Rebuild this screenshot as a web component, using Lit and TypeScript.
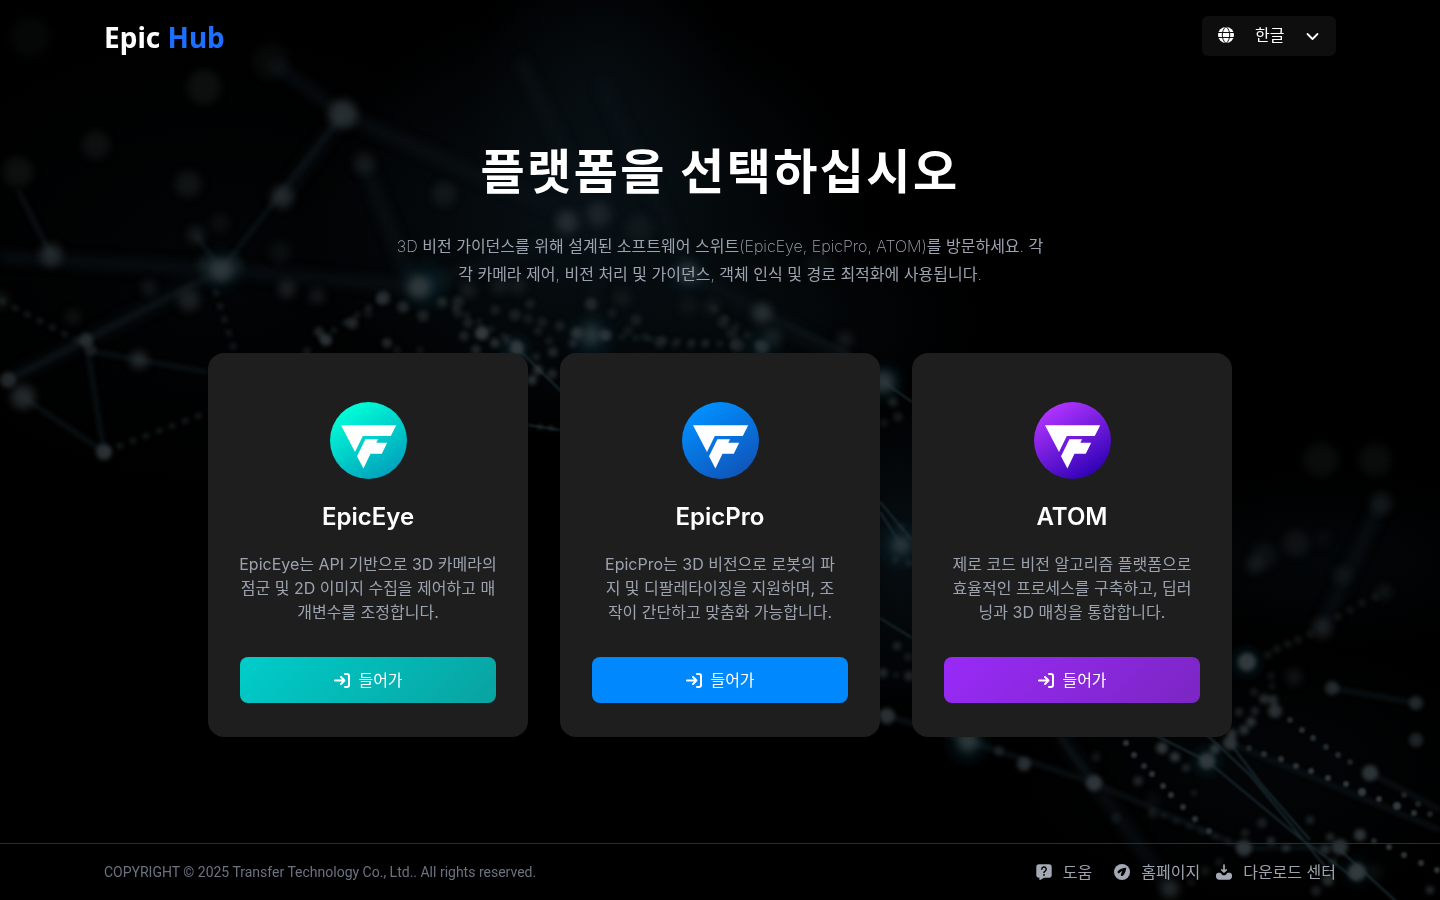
import { LitElement, html, svg, css } from "lit";
import { customElement, property } from "lit/decorators.js";

type Dot = [x: number, y: number, r: number, o: number];

const SOFT_DOTS: Dot[] = [
  [204, 87, 17, 0.25], [271, 62, 18, 0.15], [30, 37, 20, 0.1], [343, 114, 14, 0.75], [96, 145, 14, 0.25],
  [18, 172, 15, 0.25], [188, 184, 13, 0.3], [282, 197, 11, 0.65], [364, 163, 11, 0.35], [444, 194, 12, 0.3],
  [196, 235, 9, 0.4], [220, 223, 10, 0.2], [51, 255, 11, 0.65], [221, 270, 11, 0.9], [206, 264, 9, 0.3],
  [234, 264, 9, 0.3], [280, 252, 11, 0.2], [419, 287, 11, 0.95], [149, 288, 8, 0.35], [189, 300, 11, 0.5],
  [287, 289, 9, 0.5], [317, 296, 8, 0.4], [73, 317, 8, 0.25], [139, 360, 9, 0.65], [23, 397, 12, 0.65],
  [0, 300, 9, 0.3], [567, 222, 11, 0.65], [599, 214, 12, 0.45], [640, 228, 14, 0.2], [688, 273, 11, 0.6],
  [762, 313, 10, 0.75], [773, 337, 9, 0.4], [712, 307, 8, 0.3], [845, 340, 8, 0.4], [468, 290, 8, 0.4],
  [500, 286, 8, 0.35], [518, 286, 8, 0.35], [622, 298, 9, 0.25], [688, 306, 9, 0.2], [820, 265, 14, 0.15],
  [1321, 460, 17, 0.2], [1375, 460, 16, 0.2], [1381, 503, 11, 0.35], [1296, 543, 13, 0.25], [1255, 565, 9, 0.35],
  [1264, 555, 13, 0.2], [1323, 538, 8, 0.15], [1342, 575, 9, 0.25], [1384, 592, 8, 0.3], [1322, 628, 10, 0.5],
  [1294, 677, 8, 0.35], [1153, 800, 7, 0.2], [968, 741, 10, 0.9], [884, 382, 10, 0.9], [1170, 889, 9, 0.65],
  [1375, 872, 8, 0.2], [901, 545, 9, 0.8], [591, 335, 10, 0.7],
];

const FINE_DOTS: Dot[] = [
  [86, 340, 7, 0.7], [91, 350, 6, 0.4], [8, 380, 8, 0.65], [104, 452, 8, 0.8], [383, 298, 7, 0.75],
  [403, 307, 6, 0.6], [423, 316, 6, 0.5], [352, 323, 6, 0.65], [368, 313, 5, 0.3], [319, 332, 5, 0.6],
  [326, 340, 6, 0.85], [307, 351, 4, 0.4], [387, 343, 5, 0.65], [397, 350, 4, 0.3], [420, 350, 4, 0.3],
  [482, 333, 7, 1], [464, 336, 5, 0.55], [468, 323, 5, 0.5], [458, 313, 5, 0.4], [495, 343, 5, 0.7],
  [476, 350, 5, 0.6], [517, 348, 7, 1], [507, 340, 4, 0.5], [442, 303, 6, 0.4], [458, 302, 6, 0.5],
  [495, 310, 5, 0.4], [515, 315, 6, 0.45], [530, 304, 5, 0.4], [528, 319, 5, 0.35], [542, 322, 5, 0.4],
  [538, 331, 4, 0.4], [560, 326, 5, 0.45], [553, 352, 5, 0.6], [549, 341, 4, 0.35], [536, 357, 4, 0.5],
  [538, 370, 5, 0.8], [552, 374, 5, 0.6], [532, 380, 5, 0.8], [577, 333, 6, 0.8], [605, 335, 6, 0.8],
  [591, 304, 6, 0.6], [573, 343, 4, 0.6], [612, 313, 5, 0.3], [636, 320, 6, 0.4], [628, 331, 5, 0.3],
  [645, 337, 4, 0.35], [660, 342, 6, 0.45], [675, 344, 4, 0.35], [691, 345, 4, 0.35], [705, 344, 4, 0.35],
  [723, 322, 6, 0.4], [732, 333, 6, 0.35], [737, 345, 7, 0.5], [762, 347, 7, 0.7], [893, 402, 5, 0.5],
  [898, 417, 5, 0.4], [884, 423, 4, 0.3], [540, 427, 2, 1], [551, 428, 2, 1], [895, 560, 3, 0.5],
  [901, 527, 3, 0.4], [909, 563, 3, 0.5], [897, 646, 4, 0.6], [908, 657, 4, 0.4], [883, 673, 5, 0.6],
  [896, 675, 3, 0.4], [909, 676, 5, 0.6], [887, 716, 8, 0.8], [999, 751, 5, 0.5], [1024, 764, 7, 0.8],
  [1094, 783, 8, 0.9], [1096, 757, 5, 0.35], [1116, 818, 5, 0.3], [1153, 814, 5, 0.3], [1138, 781, 5, 0.6],
  [1162, 748, 6, 0.9], [1175, 757, 5, 0.9], [1186, 768, 4, 0.6], [1194, 793, 3, 0.5], [1207, 761, 8, 1],
  [1230, 743, 7, 0.9], [1215, 749, 5, 0.9], [1232, 734, 5, 0.8], [1244, 848, 8, 0.9], [1262, 823, 5, 0.5],
  [1247, 662, 9, 1], [1332, 688, 7, 0.7], [1416, 703, 7, 0.65], [1416, 740, 7, 0.6], [1275, 711, 7, 0.8],
  [1264, 699, 5, 0.7], [1273, 700, 5, 0.7], [1271, 676, 4, 0.3], [1272, 686, 3, 0.4], [1254, 692, 4, 0.4],
  [1239, 712, 4, 0.6], [1255, 711, 4, 0.6], [1251, 722, 5, 0.8], [1244, 730, 5, 0.8], [1370, 773, 8, 0.9],
  [1340, 847, 8, 0.85], [1360, 835, 6, 0.9], [1357, 872, 9, 1], [1328, 880, 6, 0.7], [1316, 891, 5, 0.5],
  [1310, 820, 4, 0.6], [1330, 837, 4, 0.7], [1325, 850, 5, 0.7], [1333, 862, 4, 0.5], [1245, 833, 4, 0.5],
  [1271, 841, 4, 0.7], [1286, 848, 4, 0.7], [1430, 890, 4, 0.7], [1205, 871, 5, 0.3], [1219, 862, 4, 0.35],
  [1191, 882, 4, 0.3], [1310, 634, 4, 0.3], [1298, 640, 4, 0.35], [1288, 644, 4, 0.35], [1277, 649, 4, 0.35],
  [1268, 655, 4, 0.35], [1375, 597, 4, 0.3], [1362, 603, 4, 0.3], [1350, 610, 4, 0.3], [1338, 617, 4, 0.3],
];

const BEADS: Dot[] = [
  [1126, 743, 3, 0.9], [1134, 755, 3, 0.9], [1144, 766, 3, 0.8], [1152, 774, 3, 0.9], [1163, 786, 3, 0.9],
  [1171, 795, 3, 0.9], [1183, 807, 3, 0.9], [1195, 819, 3, 0.9], [1209, 831, 3, 0.9], [1290, 720, 3, 0.7],
  [1302, 730, 3, 0.8], [1313, 738, 3, 0.8], [1326, 747, 3, 0.7], [1338, 755, 3, 0.7], [1350, 762, 3, 0.6],
  [1249, 748, 3, 0.6], [1264, 754, 3, 0.8], [1281, 759, 3, 0.9], [1296, 766, 3, 0.9], [1311, 771, 3, 1],
  [1328, 778, 3, 1], [1346, 784, 3, 1], [1362, 792, 4, 1], [1379, 799, 3, 1], [1397, 806, 4, 1],
  [1414, 813, 3, 0.9], [1430, 814, 3, 0.6], [1404, 795, 3, 0.6], [1418, 804, 3, 0.6], [1374, 841, 3, 0.7],
  [1389, 847, 3, 0.9], [1404, 855, 3, 0.9], [1421, 863, 3, 0.9], [1437, 870, 3, 0.9],
];

@customElement("network-backdrop")
class NetworkBackdrop extends LitElement {
  static styles = css`
    :host { display: block; overflow: hidden; background: #000; }
    svg { display: block; width: 100%; height: 100%; }
    filter { color-interpolation-filters: sRGB; }
    .wide { fill: none; stroke: #0b1318; stroke-width: 13; opacity: 0.6; }
    .mid { fill: none; stroke: #0c1418; stroke-width: 5; opacity: 0.8; }
    .thin { fill: none; stroke: #1a2a30; stroke-width: 2; }
    .beaded { fill: none; stroke: #161e21; stroke-width: 5; stroke-dasharray: 6 8; }
    .dots { fill: #323a3d; }
  `;

  private dots(list: Dot[]) {
    return list.map(([x, y, r, o]) => svg`<circle cx=${x} cy=${y} r=${r} opacity=${o}></circle>`);
  }

  render() {
    return html`
      <svg viewBox="0 0 1440 900" preserveAspectRatio="xMidYMid slice" aria-hidden="true">
        <defs>
          <filter id="haze" x="-20%" y="-20%" width="140%" height="140%"><feGaussianBlur stdDeviation="5"/></filter>
          <filter id="soft" x="-20%" y="-20%" width="140%" height="140%"><feGaussianBlur stdDeviation="4"/></filter>
          <filter id="fine" x="-20%" y="-20%" width="140%" height="140%"><feGaussianBlur stdDeviation="2"/></filter>
          <filter id="crisp" x="-20%" y="-20%" width="140%" height="140%"><feGaussianBlur stdDeviation="0.8"/></filter>
          <radialGradient id="mist"><stop offset="0" stop-color="#0a141a"/><stop offset="1" stop-color="#0a141a" stop-opacity="0"/></radialGradient>
          <radialGradient id="glow"><stop offset="0" stop-color="#0d3540" stop-opacity=".5"/><stop offset="1" stop-color="#0d3540" stop-opacity="0"/></radialGradient>
        </defs>
        <g fill="url(#mist)">
          <ellipse cx="590" cy="220" rx="280" ry="220" opacity=".85"/>
          <ellipse cx="600" cy="100" rx="130" ry="180" opacity=".5"/>
          <ellipse cx="220" cy="260" rx="330" ry="230" opacity=".2"/>
          <ellipse cx="780" cy="320" rx="200" ry="100" opacity=".4"/>
          <ellipse cx="900" cy="550" rx="80" ry="170" opacity=".7"/>
          <ellipse cx="1320" cy="560" rx="200" ry="90" opacity=".3"/>
          <ellipse cx="1260" cy="770" rx="240" ry="130" opacity=".25"/>
        </g>
        <g filter="url(#haze)">
          <path class="wide" d="M271 62 343 114 470 172 600 225M282 197 343 114M364 163 412 285M520 60 600 225 591 330M600 80 690 273 884 382M419 287 600 225M0 257 221 270 419 287M221 270 86 340 8 380M1381 503 1322 628M1060 735 1170 889"/>
        </g>
        <g filter="url(#fine)">
          <path class="mid" d="M18 190 51 255M343 114 221 270M86 340 104 452 23 397M86 350 139 360 208 372M221 270 196 235M221 270 86 340 8 380M968 741 1094 783 1244 848 1340 847M880 713 968 741M1332 688 1416 703M1094 783 1060 737M1370 773 1440 810M1230 743 1440 830M762 313 850 355"/>
          <path class="beaded" d="M104 452 208 412M215 290 235 352M0 300 86 345M383 298 319 340M440 300 520 345M591 335 740 345M712 307 762 347M1244 848 1150 810"/>
        </g>
        <g filter="url(#crisp)">
          <path class="thin" d="M1155 735 1207 761 1300 838 1357 880M1207 735 1250 775 1328 870M1230 743 1262 785 1310 840M517 348 566 396M528 425 560 430M880 512 901 545M880 502 912 540M880 618 912 638M884 382 912 402M1340 850 1400 905"/>
        </g>
        <g fill="url(#glow)">
          <circle cx="221" cy="270" r="26"/><circle cx="425" cy="285" r="30"/><circle cx="968" cy="743" r="26"/>
          <circle cx="1247" cy="662" r="20"/><circle cx="901" cy="545" r="28"/><circle cx="884" cy="382" r="24"/>
          <circle cx="591" cy="338" r="28"/><circle cx="1207" cy="761" r="20"/><circle cx="515" cy="350" r="20"/>
          <circle cx="688" cy="275" r="26" opacity=".6"/><circle cx="762" cy="345" r="24" opacity=".6"/>
          <circle cx="1357" cy="872" r="20" opacity=".6"/>
        </g>
        <g class="dots" filter="url(#soft)">${this.dots(SOFT_DOTS)}</g>
        <g class="dots" filter="url(#fine)">${this.dots(FINE_DOTS)}</g>
        <g class="dots" filter="url(#crisp)">${this.dots(BEADS)}</g>
      </svg>
    `;
  }
}

interface Product {
  name: string;
  tone: "teal" | "blue" | "violet";
  from: string;
  to: string;
  lines: string[];
}

const PRODUCTS: Product[] = [
  {
    name: "EpicEye", tone: "teal", from: "#00ffd8", to: "#009fbc",
    lines: ["EpicEye는 API 기반으로 3D 카메라의", "점군 및 2D 이미지 수집을 제어하고 매", "개변수를 조정합니다."],
  },
  {
    name: "EpicPro", tone: "blue", from: "#0090ff", to: "#1054b8",
    lines: ["EpicPro는 3D 비전으로 로봇의 파", "지 및 디팔레타이징을 지원하며, 조", "작이 간단하고 맞춤화 가능합니다."],
  },
  {
    name: "ATOM", tone: "violet", from: "#b034ff", to: "#2c00b4",
    lines: ["제로 코드 비전 알고리즘 플랫폼으로", "효율적인 프로세스를 구축하고, 딥러", "닝과 3D 매칭을 통합합니다."],
  },
];

@customElement("product-card")
class ProductCard extends LitElement {
  @property({ attribute: false }) product!: Product;

  static styles = css`
    :host { display: block; }
    .card {
      box-sizing: border-box; height: 100%; display: flex; flex-direction: column; align-items: center;
      padding: 49px 32px 34px; border-radius: 16px; background: #1e1e1e; text-align: center;
    }
    .mark { display: block; width: 77px; height: 77px; }
    h2 { margin: 22px 0 0; font-family: Inter, "Noto Sans CJK KR", sans-serif; font-size: 24px; line-height: 32px; font-weight: 600; color: #fff; }
    p { margin: 19px 0 32px; font-size: 16px; line-height: 24px; color: #9ca3af; white-space: nowrap; }
    .enter {
      width: 100%; height: 46px; margin-top: auto; padding: 0; border: 0; border-radius: 8px; cursor: pointer;
      display: flex; align-items: center; justify-content: center; gap: 7px;
      font: inherit; font-size: 16px; line-height: 24px; color: #fff;
    }
    .enter svg { width: 18px; height: 18px; fill: none; stroke: #fff; stroke-width: 2; stroke-linecap: round; stroke-linejoin: round; }
    .teal { background: linear-gradient(135deg, #00cdca, #08a3a1); }
    .blue { background: #0088ff; }
    .violet { background: linear-gradient(135deg, #992af8, #7b26c3); }
  `;

  render() {
    const p = this.product;
    return html`
      <article class="card">
        <svg class="mark" viewBox="0 0 77 77" aria-hidden="true">
          <defs>
            <linearGradient id="fill" x1="0.25" y1="0.05" x2="0.8" y2="0.95">
              <stop offset="0" stop-color=${p.from}></stop>
              <stop offset="1" stop-color=${p.to}></stop>
            </linearGradient>
          </defs>
          <circle cx="38.5" cy="38.5" r="38.5" fill="url(#fill)"></circle>
          <path fill="#fff" d="M11 23.3H66.2L60.8 34H32.8L25 50ZM35.4 37.3H48L46.4 40.7H57.2L51.8 51.7H40.5L33.4 66.4 27 54.2Z"></path>
        </svg>
        <h2>${p.name}</h2>
        <p>${p.lines.map((line, i) => html`${i ? html`<br>` : ""}${line}`)}</p>
        <button class="enter ${p.tone}" type="button">
          <svg viewBox="0 0 18 18" aria-hidden="true">
            <path d="M2 9.500h9.500M8 6l3.500 3.500L8 13M12 3h2a2 2 0 0 1 2 2v9a2 2 0 0 1-2 2h-2"></path>
          </svg>
          들어가
        </button>
      </article>
    `;
  }
}

@customElement("app-root")
class AppRoot extends LitElement {
  static styles = css`
    :host {
      position: relative; display: flex; flex-direction: column; min-height: 100vh; background: #000; color: #fff;
      font-family: Inter, "Noto Sans CJK KR", sans-serif; font-size: 16px;
    }
    .backdrop { position: absolute; inset: 0; }
    .wrap { box-sizing: border-box; width: 100%; max-width: 1280px; margin: 0 auto; padding: 0 24px; display: flex; align-items: center; justify-content: space-between; }
    header, main, footer { position: relative; }
    header .wrap { height: 72px; }
    .brand { padding-top: 2px; font-family: "Noto Sans", sans-serif; font-size: 28px; line-height: 40px; font-weight: 700; color: #fff; text-decoration: none; }
    .brand span { color: #1d70ff; }
    .lang { box-sizing: border-box; width: 134px; height: 40px; padding: 0 15px 2px; border-radius: 6px; background: #0e0e0e; display: flex; align-items: center; }
    .lang label { display: flex; }
    .lang svg { flex: none; width: 18px; height: 18px; }
    .lang select {
      flex: 1; min-width: 0; width: 0; height: 36px; padding: 0 0 2px 20px; border: 0; background: transparent; color: #fff;
      appearance: none; font-family: "Noto Sans CJK KR", sans-serif; font-size: 16px; cursor: pointer;
    }
    .lang option { color: #fff; background: #0e0e0e; }
    main { flex: 1; display: flex; flex-direction: column; align-items: center; padding: 72px 24px 0; }
    h1 { margin: 0; font-family: "Noto Sans CJK KR", sans-serif; font-size: 48px; line-height: 48px; font-weight: 700; letter-spacing: 0.05em; text-align: center; }
    .lead { margin: 40px 0 0; font-size: 16px; line-height: 28px; font-weight: 400; color: #9ca3af; text-align: center; }
    .light { font-weight: 200; }
    .cards { width: 100%; max-width: 1024px; margin: 65px 0 40px; display: grid; grid-template-columns: repeat(3, minmax(0, 1fr)); gap: 32px; }
    product-card { min-height: 384px; }
    footer { border-top: 1px solid #2d2d2d; }
    footer .wrap { height: 56px; }
    .copy { margin: 0; font-family: Roboto, sans-serif; font-size: 14px; line-height: 20px; color: #6b7280; }
    nav, .pair { display: flex; align-items: center; }
    nav { gap: 22px; }
    .pair { gap: 16px; }
    nav a { display: flex; align-items: center; gap: 11px; font-size: 16px; line-height: 24px; color: #9ca3af; text-decoration: none; }
    nav svg { width: 16px; height: 16px; fill: #a3a9b5; }
  `;

  render() {
    return html`
      <network-backdrop class="backdrop"></network-backdrop>
      <header>
        <div class="wrap">
          <a class="brand" href="#">Epic <span>Hub</span></a>
          <div class="lang">
            <label for="language">
              <svg viewBox="0 0 18 18" role="img" aria-label="언어">
                <circle cx="9" cy="9" r="8" fill="#fff"></circle>
                <path d="M1 6.500h16M1 11.500h16M9 .5c-5 4.500-5 12.500 0 17M9 .5c5 4.500 5 12.500 0 17" fill="none" stroke="#0e0e0e" stroke-width="1"></path>
              </svg>
            </label>
            <select id="language"><option>한글</option><option>English</option><option>中文</option></select>
            <svg viewBox="0 0 18 18" aria-hidden="true">
              <path d="M4.500 8l5 5 5-5" fill="none" stroke="#fff" stroke-width="1.800" stroke-linecap="round" stroke-linejoin="round"></path>
            </svg>
          </div>
        </div>
      </header>
      <main>
        <h1>플랫폼을 선택하십시오</h1>
        <p class="lead">
          <span class="light">3D</span> 비전 가이던스를 위해 설계된 소프트웨어 스위트<span class="light">(EpicEye, EpicPro, ATOM)</span>를 방문하세요<span class="light">.</span> 각<br>각
          카메라 제어<span class="light">,</span> 비전 처리 및 가이던스<span class="light">,</span> 객체 인식 및 경로 최적화에 사용됩니다<span class="light">.</span>
        </p>
        <section class="cards">
          ${PRODUCTS.map((p) => html`<product-card .product=${p}></product-card>`)}
        </section>
      </main>
      <footer>
        <div class="wrap">
          <p class="copy">COPYRIGHT © 2025 Transfer Technology Co., Ltd.. All rights reserved.</p>
          <nav>
            <a href="#help">
              <svg viewBox="0 0 16 16" aria-hidden="true">
                <path fill-rule="evenodd" d="M3 .3h10a2.700 2.700 0 0 1 2.700 2.700v8A2.700 2.700 0 0 1 13 13.700H8L4.200 16q-.8.300-.8-.5v-1.800H3A2.700 2.700 0 0 1 .3 11V3A2.700 2.700 0 0 1 3 .3Z"></path>
                <path d="M5.800 5.200a2.200 2.200 0 1 1 3.300 1.900q-1.100.6-1.100 1.500" fill="none" stroke="#000" stroke-width="1.500" stroke-linecap="round"></path>
                <circle cx="8" cy="10.900" r=".95" fill="#000"></circle>
              </svg>도움</a>
            <div class="pair">
              <a href="#home">
                <svg viewBox="0 0 16 16" aria-hidden="true">
                  <circle cx="8" cy="8" r="8"></circle>
                  <path d="M12.300 3.700C9 4 5.500 5 3.800 7.300c-.6.900-.1 1.900.9 2.100L8.300 6.800 6.700 11c.3 1.200 1.500 1.300 2.300.5C11 9.500 12 6.500 12.300 3.700Z" fill="#000"></path>
                </svg>홈페이지</a>
              <a href="#downloads">
                <svg viewBox="0 0 16 16" aria-hidden="true">
                  <path d="M8 1v6.500M5.800 5.800 8 8l2.200-2.200" fill="none" stroke="#a3a9b5" stroke-width="1.700" stroke-linecap="round" stroke-linejoin="round"></path>
                  <path d="M2.500 8.700h1.300c.8 0 1.200.4 1.600 1 .6 1 1.500 1.500 2.600 1.500s2-.5 2.600-1.500c.4-.6.800-1 1.600-1h1.300c1.500 0 2.500 1 2.500 2.500v1.300c0 2-1.300 3.200-3.200 3.200H3.200C1.300 15.700 0 14.500 0 12.500v-1.300c0-1.500 1-2.500 2.500-2.500Z"></path>
                </svg>다운로드 센터</a>
            </div>
          </nav>
        </div>
      </footer>
    `;
  }
}
